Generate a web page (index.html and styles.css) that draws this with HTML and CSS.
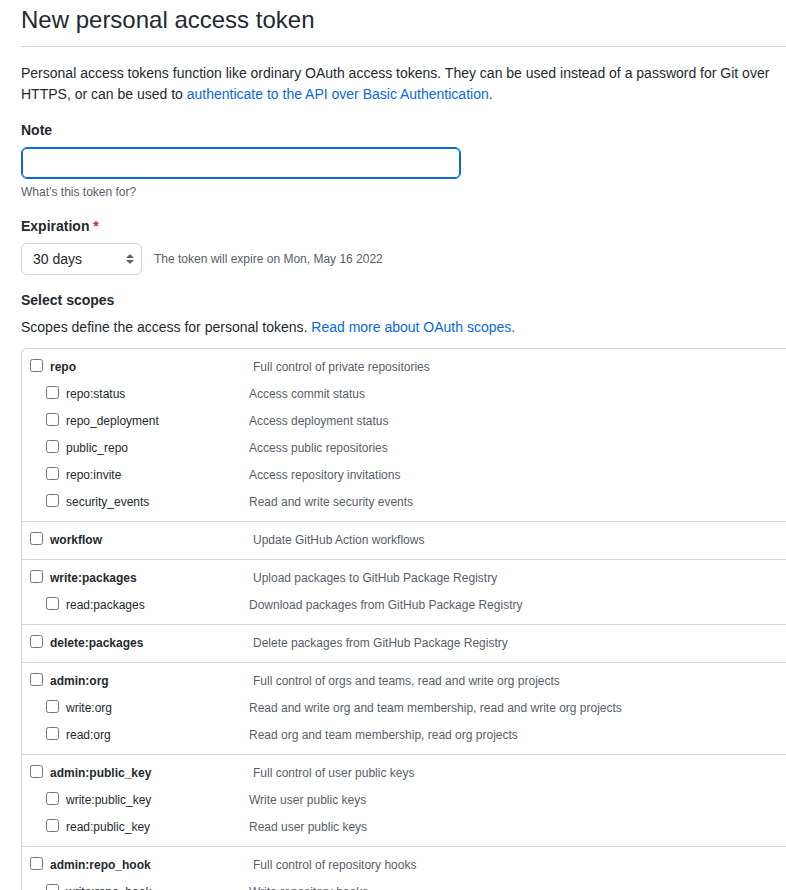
FILE: index.html
```html
<!DOCTYPE html>
<html lang="en">
<head>
<meta charset="utf-8">
<title>New personal access token</title>
<link rel="stylesheet" href="styles.css">
</head>
<body>
<div class="page">
  <div class="subhead"><h1>New personal access token</h1></div>
  <p class="intro">Personal access tokens function like ordinary OAuth access tokens. They can be used instead of a password for Git over HTTPS, or can be used to <a href="#">authenticate to the API over Basic Authentication</a>.</p>

  <div class="form-group">
    <label class="label" for="note">Note</label>
    <input class="input" id="note" type="text">
    <p class="note">What’s this token for?</p>
  </div>

  <div class="form-group exp">
    <label class="label" for="exp">Expiration <span class="req">*</span></label>
    <div class="exp-row">
      <span class="select-wrap">
        <select class="select" id="exp"><option>30 days</option></select>
        <svg class="select-icon" width="16" height="16" viewBox="0 0 16 16"><path d="M4.427 9.427l3.396 3.396a.25.25 0 00.354 0l3.396-3.396A.25.25 0 0011.396 9H4.604a.25.25 0 00-.177.427zM4.427 6.573l3.396-3.396a.25.25 0 01.354 0l3.396 3.396A.25.25 0 0111.396 7H4.604a.25.25 0 01-.177-.427z" fill="#57606a"/></svg>
      </span>
      <span class="exp-note">The token will expire on Mon, May 16 2022</span>
    </div>
  </div>

  <div class="label">Select scopes</div>
  <p class="scopes-intro">Scopes define the access for personal tokens. <a href="#">Read more about OAuth scopes.</a></p>

  <div class="scopes">
    <div class="group">
      <div class="row"><input type="checkbox"><span class="name">repo</span><span class="desc">Full control of private repositories</span></div>
      <div class="row sub"><input type="checkbox"><span class="name">repo:status</span><span class="desc">Access commit status</span></div>
      <div class="row sub"><input type="checkbox"><span class="name">repo_deployment</span><span class="desc">Access deployment status</span></div>
      <div class="row sub"><input type="checkbox"><span class="name">public_repo</span><span class="desc">Access public repositories</span></div>
      <div class="row sub"><input type="checkbox"><span class="name">repo:invite</span><span class="desc">Access repository invitations</span></div>
      <div class="row sub"><input type="checkbox"><span class="name">security_events</span><span class="desc">Read and write security events</span></div>
    </div>
    <div class="group">
      <div class="row"><input type="checkbox"><span class="name">workflow</span><span class="desc">Update GitHub Action workflows</span></div>
    </div>
    <div class="group">
      <div class="row"><input type="checkbox"><span class="name">write:packages</span><span class="desc">Upload packages to GitHub Package Registry</span></div>
      <div class="row sub"><input type="checkbox"><span class="name">read:packages</span><span class="desc">Download packages from GitHub Package Registry</span></div>
    </div>
    <div class="group">
      <div class="row"><input type="checkbox"><span class="name">delete:packages</span><span class="desc">Delete packages from GitHub Package Registry</span></div>
    </div>
    <div class="group">
      <div class="row"><input type="checkbox"><span class="name">admin:org</span><span class="desc">Full control of orgs and teams, read and write org projects</span></div>
      <div class="row sub"><input type="checkbox"><span class="name">write:org</span><span class="desc">Read and write org and team membership, read and write org projects</span></div>
      <div class="row sub"><input type="checkbox"><span class="name">read:org</span><span class="desc">Read org and team membership, read org projects</span></div>
    </div>
    <div class="group">
      <div class="row"><input type="checkbox"><span class="name">admin:public_key</span><span class="desc">Full control of user public keys</span></div>
      <div class="row sub"><input type="checkbox"><span class="name">write:public_key</span><span class="desc">Write user public keys</span></div>
      <div class="row sub"><input type="checkbox"><span class="name">read:public_key</span><span class="desc">Read user public keys</span></div>
    </div>
    <div class="group">
      <div class="row"><input type="checkbox"><span class="name">admin:repo_hook</span><span class="desc">Full control of repository hooks</span></div>
      <div class="row sub"><input type="checkbox"><span class="name">write:repo_hook</span><span class="desc">Write repository hooks</span></div>
      <div class="row sub"><input type="checkbox"><span class="name">read:repo_hook</span><span class="desc">Read repository hooks</span></div>
    </div>
  </div>
</div>
</body>
</html>
```

FILE: styles.css
```css
* { box-sizing: border-box; }
html, body {
  margin: 0;
  height: 890px;
  overflow: hidden;
  background: #fff;
}
body {
  font-family: "Liberation Sans", Arial, sans-serif;
  font-size: 14px;
  line-height: 1.5;
  color: #24292f;
}
a { color: #0969da; text-decoration: none; }

.page {
  width: 800px;
  padding: 5px 0 0 21px;
}
.subhead {
  border-bottom: 1px solid #d0d7de;
  padding-bottom: 11px;
}
.subhead h1 {
  margin: 0;
  font-size: 24px;
  font-weight: 400;
  line-height: 30px;
}
.intro { margin: 16px 0 15px; }

.form-group { margin: 0 0 15px; }
.label {
  display: block;
  font-weight: 700;
  margin-bottom: 6px;
}
.req { color: #cf222e; }

.input {
  display: block;
  width: 440px;
  height: 32px;
  margin: 0;
  padding: 5px 12px;
  font: inherit;
  border: 1px solid #0969da;
  border-radius: 6px;
  box-shadow: inset 0 0 0 1px #0969da;
  outline: none;
  background: #fff;
}
.note {
  margin: 4px 0 0;
  font-size: 12px;
  line-height: 18px;
  color: #57606a;
}

.exp-row {
  display: flex;
  align-items: center;
  gap: 12px;
}
.select-wrap {
  position: relative;
  display: inline-block;
  width: 121px;
  height: 32px;
}
.select {
  -webkit-appearance: none;
  appearance: none;
  width: 121px;
  height: 32px;
  margin: 0;
  padding: 0 24px 0 11px;
  font-family: inherit;
  font-size: 14px;
  color: #24292f;
  background: #fff;
  border: 1px solid #d0d7de;
  border-radius: 6px;
  outline: none;
}
.select-icon {
  position: absolute;
  right: 4px;
  top: 8px;
  pointer-events: none;
}
.exp-note {
  font-size: 12px;
  color: #57606a;
}

.scopes-intro { margin: 0 0 10px; }

.scopes {
  border: 1px solid #d0d7de;
  border-radius: 6px;
}
.group {
  padding: 4px 0 6px;
  border-top: 1px solid #d0d7de;
}
.group:first-child { border-top: 0; }
.row {
  display: flex;
  align-items: center;
  height: 27px;
  padding-left: 8px;
  font-size: 12px;
  white-space: nowrap;
}
.row.sub { padding-left: 24px; }
.row input {
  width: 13px;
  height: 13px;
  margin: 0 0 2px 0;
  flex: none;
}
.name {
  width: 210px;
  padding-left: 7px;
  font-weight: 700;
  color: #24292f;
  flex: none;
}
.row.sub .name {
  width: 190px;
  font-weight: 400;
}
.desc { color: #57606a; }
```
